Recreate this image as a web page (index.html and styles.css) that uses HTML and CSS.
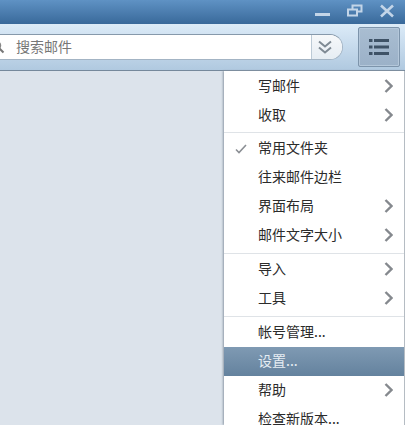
FILE: index.html
```html
<!DOCTYPE html>
<html lang="zh-CN">
<head>
  <meta charset="UTF-8">
  <title>邮件</title>
  <link rel="stylesheet" href="styles.css">
</head>
<body>
  <div class="titlebar">
    <svg class="win-icon" width="16" height="14" viewBox="0 0 16 14"><rect x="0" y="9" width="15" height="3" fill="#c3d5e8"/></svg>
    <svg class="win-icon" width="16" height="14" viewBox="0 0 16 14"><path d="M5.5 5V1.5h9v6H10.5M1 5.5h9v6H1z" fill="none" stroke="#c3d5e8" stroke-width="2"/></svg>
    <svg class="win-icon" width="16" height="14" viewBox="0 0 16 14"><path d="M2 1.5l12 11M14 1.5l-12 11" fill="none" stroke="#c3d5e8" stroke-width="2.6"/></svg>
  </div>

  <div class="toolbar">
    <div class="search">
      <svg class="search-icon" width="14" height="14" viewBox="0 0 14 14"><circle cx="5.5" cy="5.5" r="4" fill="none" stroke="#888" stroke-width="1.5"/><path d="M8.5 8.5l4 4" stroke="#777" stroke-width="2"/></svg>
      <span class="search-text">搜索邮件</span>
      <div class="search-more">
        <svg width="14" height="14" viewBox="0 0 14 14"><path d="M1 1.5L7 6.5l6-5M1 7.5L7 12.5l6-5" fill="none" stroke="#7f8a94" stroke-width="2"/></svg>
      </div>
    </div>
    <div class="menu-btn">
      <svg width="20" height="16" viewBox="0 0 20 16"><path d="M0 1.5h3.5M5 1.5h15M0 8h3.5M5 8h15M0 14.5h3.5M5 14.5h15" stroke="#3e5266" stroke-width="3"/></svg>
    </div>
  </div>

  <div class="main">
    <div class="menu">
      <div class="item">写邮件<svg class="arrow" width="9" height="14" viewBox="0 0 9 14"><path d="M1.5 1L7.5 7l-6 6" fill="none" stroke="#85898e" stroke-width="2.4"/></svg></div>
      <div class="item">收取<svg class="arrow" width="9" height="14" viewBox="0 0 9 14"><path d="M1.5 1L7.5 7l-6 6" fill="none" stroke="#85898e" stroke-width="2.4"/></svg></div>
      <div class="sep tight"></div>
      <div class="item"><svg class="check" width="12" height="10" viewBox="0 0 12 10"><path d="M1 5.5l3 3L11 1" fill="none" stroke="#8b8f94" stroke-width="1.6"/></svg>常用文件夹</div>
      <div class="item">往来邮件边栏</div>
      <div class="item">界面布局<svg class="arrow" width="9" height="14" viewBox="0 0 9 14"><path d="M1.5 1L7.5 7l-6 6" fill="none" stroke="#85898e" stroke-width="2.4"/></svg></div>
      <div class="item">邮件文字大小<svg class="arrow" width="9" height="14" viewBox="0 0 9 14"><path d="M1.5 1L7.5 7l-6 6" fill="none" stroke="#85898e" stroke-width="2.4"/></svg></div>
      <div class="sep"></div>
      <div class="item">导入<svg class="arrow" width="9" height="14" viewBox="0 0 9 14"><path d="M1.5 1L7.5 7l-6 6" fill="none" stroke="#85898e" stroke-width="2.4"/></svg></div>
      <div class="item">工具<svg class="arrow" width="9" height="14" viewBox="0 0 9 14"><path d="M1.5 1L7.5 7l-6 6" fill="none" stroke="#85898e" stroke-width="2.4"/></svg></div>
      <div class="sep"></div>
      <div class="item">帐号管理...</div>
      <div class="item active">设置...</div>
      <div class="item">帮助<svg class="arrow" width="9" height="14" viewBox="0 0 9 14"><path d="M1.5 1L7.5 7l-6 6" fill="none" stroke="#85898e" stroke-width="2.4"/></svg></div>
      <div class="item">检查新版本...</div>
    </div>
  </div>
</body>
</html>
```

FILE: styles.css
```css
html, body {
  height: 100%;
}

body {
  display: flex;
  flex-direction: column;
  margin: 0;
  overflow: hidden;
  font-family: "Noto Sans CJK SC", "Liberation Sans", sans-serif;
  font-size: 14px;
  background-color: #dce3eb;
}

.titlebar {
  display: flex;
  justify-content: flex-end;
  align-items: flex-start;
  gap: 16px;
  flex: none;
  height: 24px;
  padding: 4px 10px 0 0;
  box-sizing: border-box;
  background: linear-gradient(#5f92c4, #39699a);
}

.win-icon {
  display: block;
}

.toolbar {
  display: flex;
  align-items: center;
  flex: none;
  height: 47px;
  padding: 0 5px 1px 0;
  box-sizing: border-box;
  background: linear-gradient(#dcebf8, #b0c9e0);
  border-bottom: 1px solid #75889b;
}

.search {
  display: flex;
  align-items: center;
  flex: none;
  width: 363px;
  height: 26px;
  margin-left: -20px;
  box-sizing: border-box;
  background-color: #fff;
  border: 1px solid #a3b4c4;
  border-top-color: #8699ab;
  border-radius: 0 13px 13px 0;
}

.search-icon {
  margin-left: 10px;
}

.search-text {
  margin-left: 11px;
  padding-bottom: 2px;
  flex: 1;
  color: #777;
}

.search-more {
  display: flex;
  align-items: center;
  justify-content: center;
  width: 31px;
  height: 100%;
  padding-right: 4px;
  box-sizing: border-box;
  background: linear-gradient(#f6f8fa, #e6edf3);
  border-left: 1px solid #bccad6;
  border-radius: 0 13px 13px 0;
}

.menu-btn {
  display: flex;
  align-items: center;
  justify-content: center;
  width: 42px;
  height: 40px;
  margin: 1px 0 0 15px;
  box-sizing: border-box;
  background: linear-gradient(#a9bdd1, #9bb1c8);
  border: 1px solid #7d94ab;
  box-shadow: inset 0 0 0 1px #b4c7da;
  border-radius: 2px;
}

.main {
  display: flex;
  justify-content: flex-end;
  flex: 1;
  min-height: 0;
}

.menu {
  width: 181px;
  padding-top: 1px;
  box-sizing: border-box;
  background-color: #fff;
  border-right: 1px solid #b5bcc3;
  box-shadow: -1px 0 2px #8f9ba7;
  color: #2b2b2b;
}

.item {
  position: relative;
  height: 29px;
  line-height: 26px;
  padding-left: 34px;
}

.item.active {
  background: linear-gradient(#7f9ab3, #64829e);
  color: #e6edf3;
}

.sep {
  height: 1px;
  margin: 3px 0 1px;
  background-color: #dfe3e7;
}

.sep.tight {
  margin-top: 2px;
}

.arrow {
  position: absolute;
  top: 7px;
  right: 11px;
}

.check {
  position: absolute;
  top: 10px;
  left: 11px;
}
```
